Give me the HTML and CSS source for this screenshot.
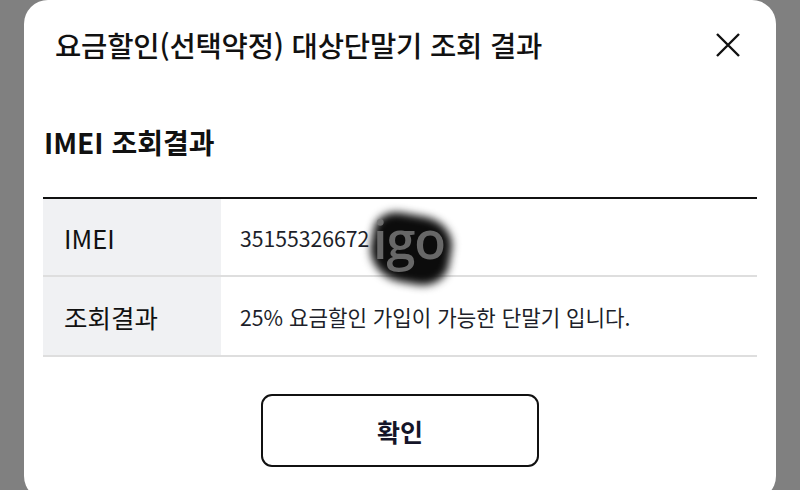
FILE: index.html
```html
<!DOCTYPE html>
<html lang="ko">
<head>
<meta charset="utf-8">
<link rel="stylesheet" href="styles.css">
</head>
<body>
<div class="modal">
  <div class="header">
    <h1 class="title">요금할인(선택약정) 대상단말기 조회 결과</h1>
    <svg class="close" width="24" height="24" viewBox="0 0 24 24"><path d="M1 1 L23 23 M23 1 L1 23" stroke="#111" stroke-width="2.4" fill="none"/></svg>
  </div>
  <h2 class="section">IMEI 조회결과</h2>
  <div class="table">
    <div class="row">
      <div class="label">IMEI</div>
      <div class="value imei">35155326672<span class="blot"></span><span class="wm">igo</span></div>
    </div>
    <div class="row row2">
      <div class="label">조회결과</div>
      <div class="value">25% 요금할인 가입이 가능한 단말기 입니다.</div>
    </div>
  </div>
  <div class="actions">
    <button class="ok">확인</button>
  </div>
</div>
</body>
</html>
```
FILE: styles.css
```css
html, body {
  margin: 0;
  padding: 0;
  height: 100%;
}
body {
  background: #808080;
  overflow: hidden;
  font-family: "Noto Sans CJK KR", "Noto Sans", sans-serif;
  color: #111;
}
.modal {
  margin-left: 24px;
  width: 752px;
  height: 500px;
  background: #fff;
  border-radius: 24px;
  padding: 0 19px;
  box-sizing: border-box;
}
.header {
  display: flex;
  align-items: center;
  justify-content: space-between;
  padding: 25px 17px 0 12px;
}
.title {
  margin: 0;
  font-size: 28.6px;
  font-weight: 500;
  line-height: 40px;
  color: #111;
  letter-spacing: -0.2px;
}
.close {
  display: block;
}
.section {
  margin: 58px 0 0 1px;
  font-size: 28px;
  font-weight: 700;
  line-height: 38px;
  color: #111;
}
.table {
  margin-top: 36px;
  border-top: 2px solid #111;
}
.row {
  display: flex;
  height: 76px;
  border-bottom: 2px solid #dedede;
}
.row2 {
  height: 78px;
}
.label {
  width: 178px;
  background: #f0f1f3;
  padding-left: 21px;
  box-sizing: border-box;
  display: flex;
  align-items: center;
  font-size: 25.5px;
  color: #111;
}
.value {
  display: flex;
  align-items: center;
  padding-left: 19px;
  font-size: 21.2px;
  color: #1d1f2a;
  position: relative;
}
.blot {
  position: absolute;
  left: 150px;
  top: 16px;
  width: 80px;
  height: 68px;
  background: #0c0c0c;
  border-radius: 30% 40% 35% 45%;
  filter: blur(4px);
  transform: rotate(10deg);
}
.wm {
  position: absolute;
  left: 152px;
  top: 4px;
  font-family: "Open Sans", sans-serif;
  font-size: 52px;
  font-weight: 600;
  letter-spacing: -1px;
  color: rgba(120, 120, 120, 0.85);
}
.actions {
  display: flex;
  justify-content: center;
  margin-top: 37px;
}
.ok {
  width: 278px;
  height: 73px;
  border: 2px solid #111;
  border-radius: 11px;
  background: #fff;
  font-family: "Noto Sans CJK KR", "Noto Sans", sans-serif;
  font-size: 25px;
  font-weight: 700;
  color: #151528;
}
```
